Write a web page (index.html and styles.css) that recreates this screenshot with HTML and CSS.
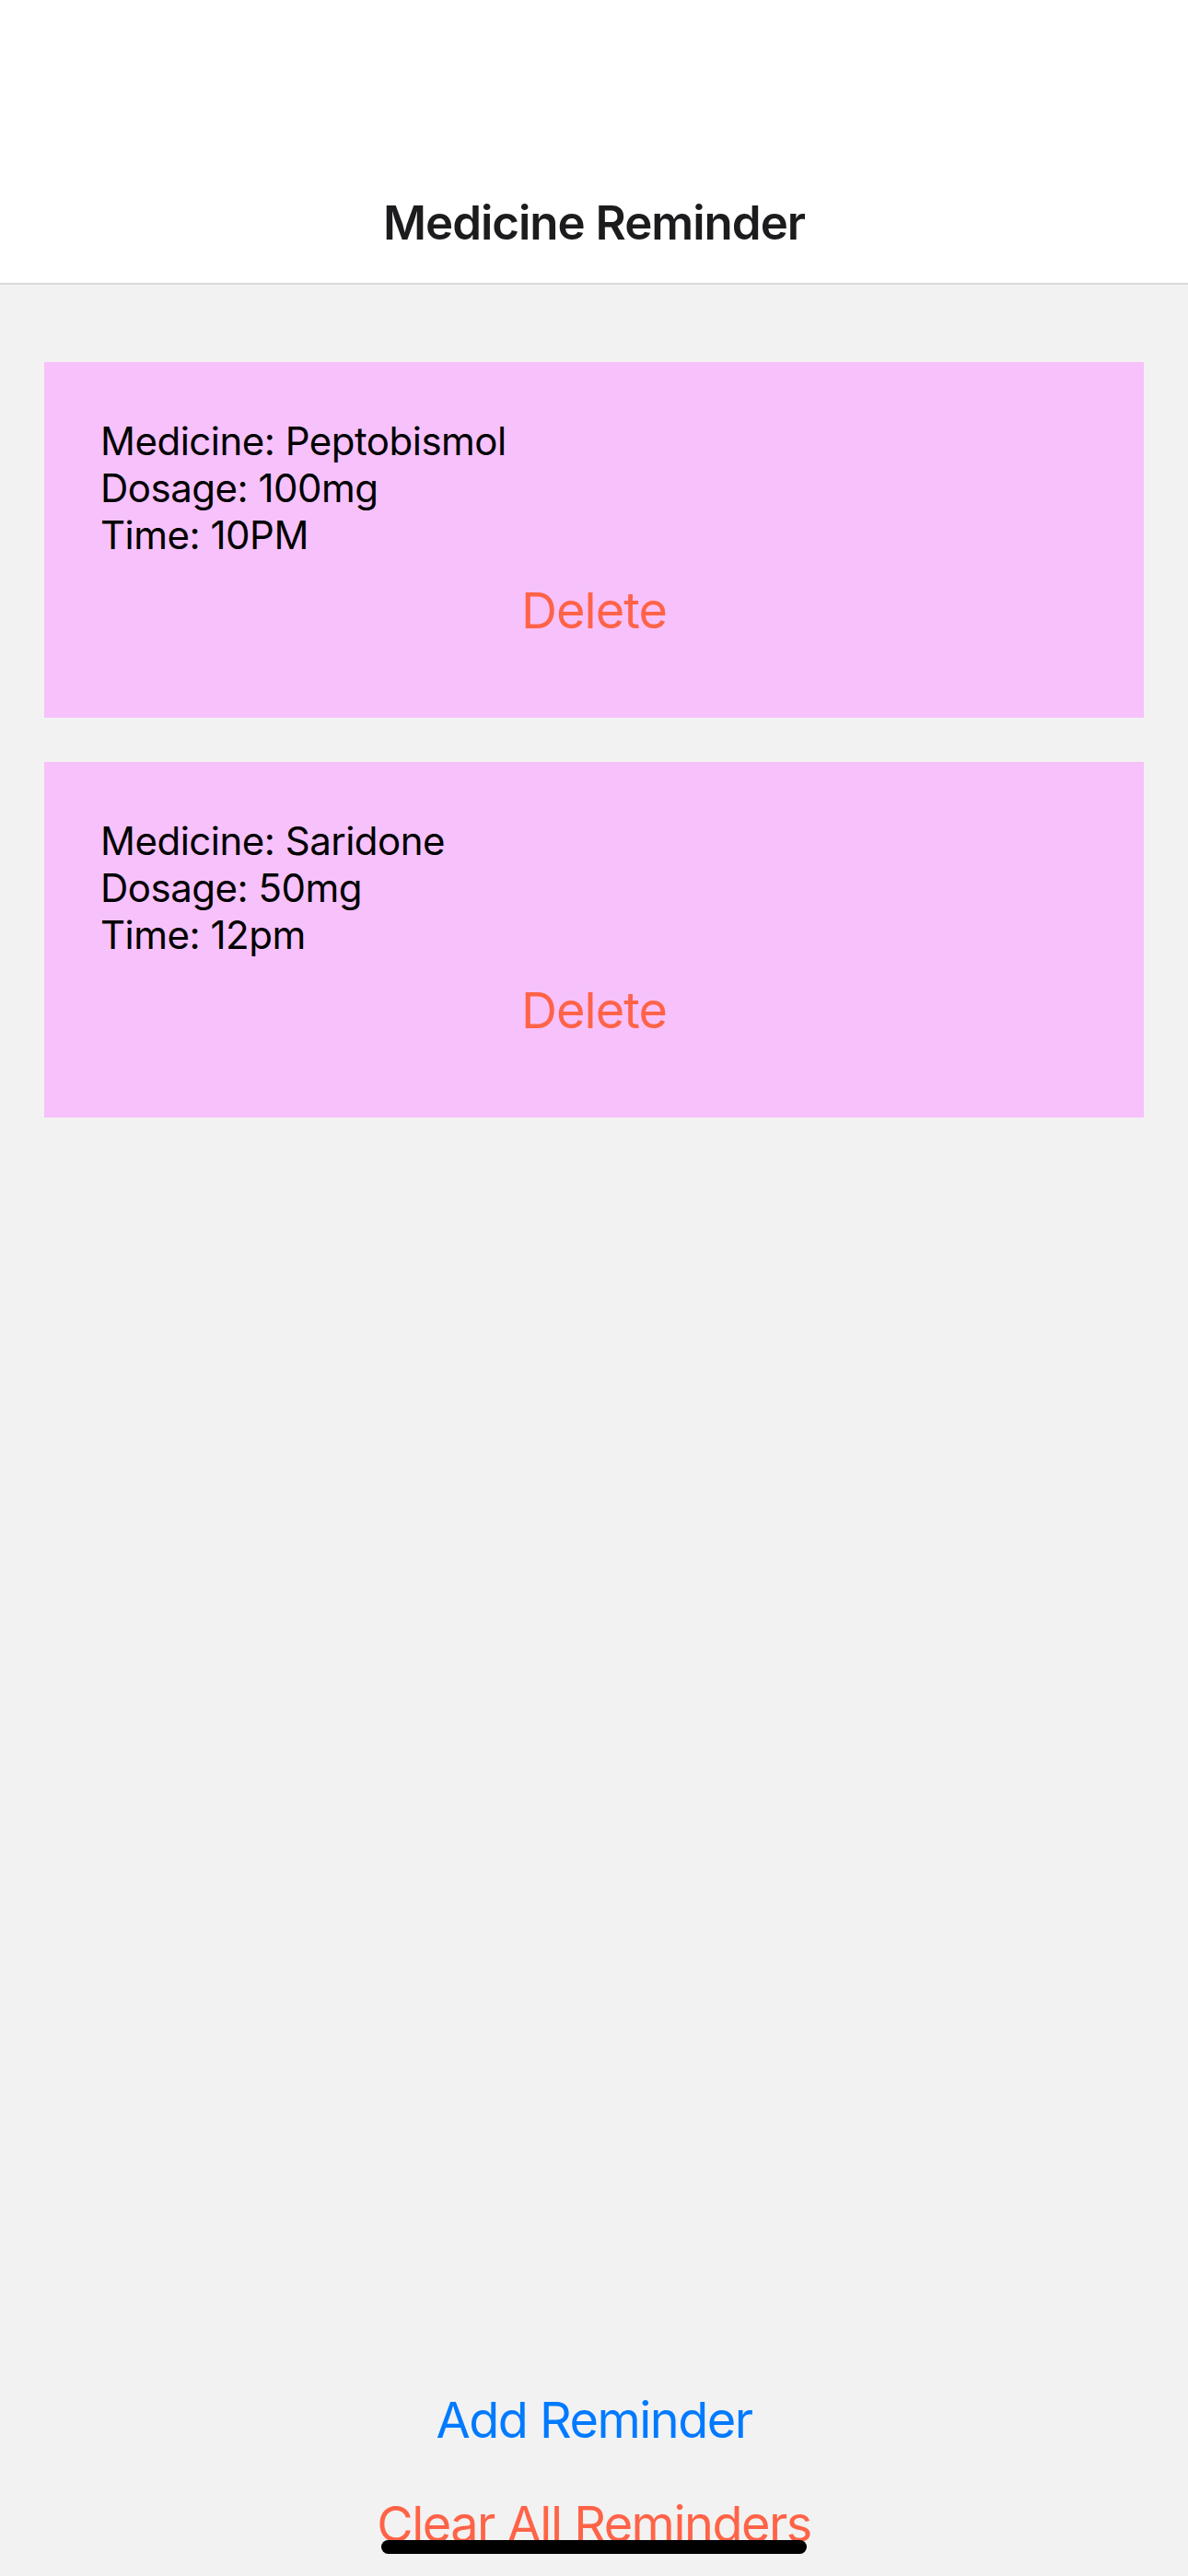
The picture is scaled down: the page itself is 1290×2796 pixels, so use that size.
FILE: index.html
```html
<!DOCTYPE html>
<html>
<head>
<meta charset="utf-8">
<link rel="stylesheet" href="styles.css">
</head>
<body>
<div class="screen">
  <header class="nav">
    <h1 class="nav-title">Medicine Reminder</h1>
  </header>
  <main class="list">
    <section class="card">
      <div class="card-info">
        <p>Medicine: Peptobismol</p>
        <p>Dosage: 100mg</p>
        <p>Time: 10PM</p>
      </div>
      <button class="btn btn-danger">Delete</button>
    </section>
    <section class="card">
      <div class="card-info">
        <p>Medicine: Saridone</p>
        <p>Dosage: 50mg</p>
        <p>Time: 12pm</p>
      </div>
      <button class="btn btn-danger">Delete</button>
    </section>
  </main>
  <footer class="actions">
    <button class="btn btn-primary">Add Reminder</button>
    <button class="btn btn-danger">Clear All Reminders</button>
  </footer>
  <div class="home-indicator"></div>
</div>
</body>
</html>
```

FILE: styles.css
```css
* { box-sizing: border-box; }
html, body {
  margin: 0;
  padding: 0;
}
body {
  background: #f2f2f2;
  font-family: Inter, "Liberation Sans", sans-serif;
}
.screen {
  position: relative;
  height: 2796px;
  display: flex;
  flex-direction: column;
}
.nav {
  height: 309px;
  background: #ffffff;
  border-bottom: 2px solid #d9d9d9;
  display: flex;
  align-items: flex-end;
  justify-content: center;
  padding-bottom: 35px;
}
.nav-title {
  margin: 0;
  font-size: 51px;
  line-height: 61px;
  font-weight: 600;
  color: #1c1c1e;
  letter-spacing: -1px;
}
.list {
  padding: 84px 48px 0;
  display: flex;
  flex-direction: column;
  gap: 48px;
}
.card {
  background: #f7c1fb;
  height: 386px;
  padding: 60px 61px 0;
  display: flex;
  flex-direction: column;
}
.card-info p {
  margin: 0;
  font-size: 42px;
  line-height: 51px;
  color: #000;
  letter-spacing: -0.5px;
}
.btn {
  border: none;
  background: none;
  padding: 0;
  font-family: inherit;
  font-size: 54px;
  line-height: 65px;
  cursor: pointer;
  letter-spacing: -0.9px;
}
.card .btn {
  margin-top: 24px;
  align-self: center;
}
.btn-danger { color: #ff6347; }
.btn-primary { color: #007aff; }
.actions {
  margin-top: auto;
  display: flex;
  flex-direction: column;
  align-items: center;
  gap: 48px;
  padding-bottom: 24px;
}
.actions .btn {
  letter-spacing: -1.5px;
}
.home-indicator {
  position: absolute;
  left: 50%;
  bottom: 24px;
  width: 462px;
  height: 15px;
  margin-left: -231px;
  background: #000;
  border-radius: 8px;
}
```
